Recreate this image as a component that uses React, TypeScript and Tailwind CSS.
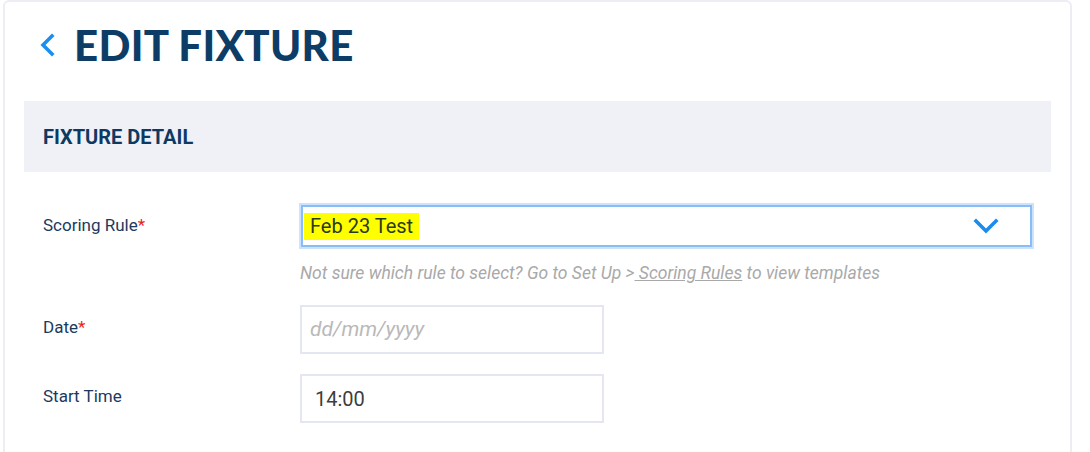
import React from 'react';

const ChevronLeft = () => (
    <svg width="16" height="24" viewBox="0 0 16 24" fill="none">
        <path d="M13 3 L4 12 L13 21" stroke="#1b8fef" strokeWidth="3.6" strokeLinecap="square" />
    </svg>
);

const ChevronDown = () => (
    <svg width="26" height="16" viewBox="0 0 26 16" fill="none">
        <path d="M3 3 L13 13 L23 3" stroke="#1b8cee" strokeWidth="3.6" strokeLinecap="square" />
    </svg>
);

const Label = ({ text, required, pt }: { text: string; required?: boolean; pt: string }) => (
    <div className={`text-[17px] leading-6 text-[#1b3a60] ${pt}`}>
        {text}
        {required && <span className="text-[#f01b1b]">*</span>}
    </div>
);

export default function App() {
    return (
        <div className="min-h-screen bg-white font-['Roboto',sans-serif]">
            <div className="ml-[3px] w-[1069px] h-[470px] border-2 border-[#eceef4] rounded-t-md px-[19px]">
                {/* Page title */}
                <div className="flex items-center h-[86px] mb-[13px]">
                    <div className="ml-[15px] mr-[19px] flex items-center">
                        <ChevronLeft />
                    </div>
                    <h1 className="font-['Lato',sans-serif] font-black text-[42px] leading-none tracking-[0.3px] text-[#0d3d66]">
                        EDIT FIXTURE
                    </h1>
                </div>

                {/* Section header */}
                <div className="h-[71px] bg-[#f0f1f6] px-[19px] flex items-center">
                    <h2 className="font-bold text-[20px] text-[#0e3a62]">FIXTURE DETAIL</h2>
                </div>

                {/* Form */}
                <div className="grid grid-cols-[257px_1fr] px-[19px] pt-[33px]">
                    <Label text="Scoring Rule" required pt="pt-[8px]" />
                    <div>
                        <div className="ml-[1px] w-[731px] h-[42px] border-2 border-[#88bdf7] shadow-[0_0_0_2px_#cde3fd] flex items-center justify-between pl-[1px] pr-[31px]">
                            <span className="bg-[#ffff00] px-[6px] h-[27px] flex items-center text-[20px] text-[#2a3a1e]">
                                Feb 23 Test
                            </span>
                            <ChevronDown />
                        </div>
                        <p className="mt-[15px] text-[17.5px] italic text-[#a9a9a9] leading-[22px]">
                            Not sure which rule to select? Go to Set Up &gt;<span className="underline"> Scoring Rules</span> to view templates
                        </p>
                    </div>

                    <Label text="Date" required pt="pt-[10px] mt-[21px]" />
                    <div className="mt-[21px]">
                        <div className="w-[304px] h-[49px] border-2 border-[#e4e6f1] flex items-center px-[8px] text-[21px] italic text-[#b9b9b9]">
                            dd/mm/yyyy
                        </div>
                    </div>

                    <Label text="Start Time" pt="pt-[10px] mt-[20px]" />
                    <div className="mt-[20px]">
                        <div className="w-[304px] h-[49px] border-2 border-[#e4e6f1] flex items-center px-[13px] text-[20px] text-[#3d3d3d]">
                            14:00
                        </div>
                    </div>
                </div>
            </div>
        </div>
    );
}
